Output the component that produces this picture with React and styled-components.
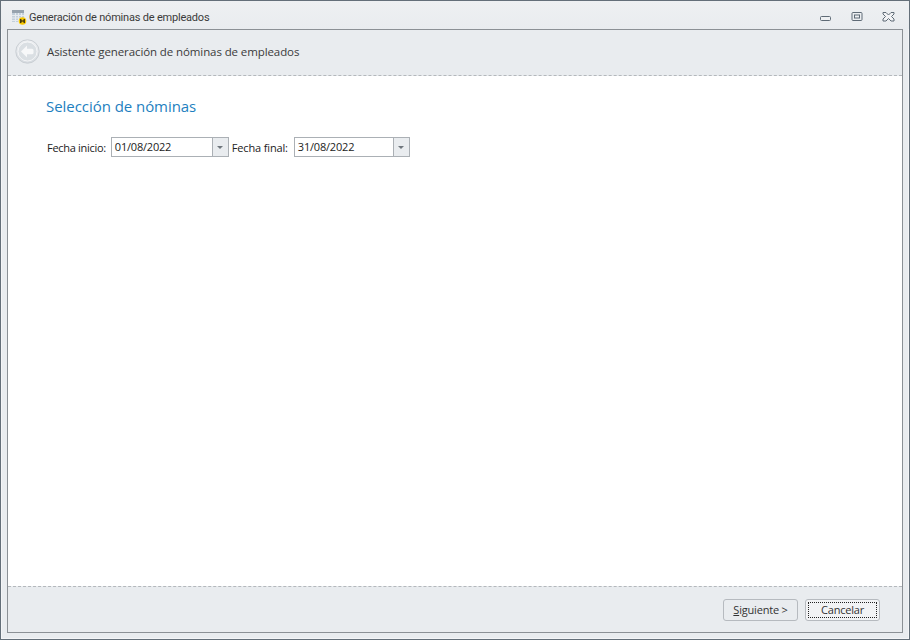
import React from "react";
import styled, { createGlobalStyle } from "styled-components";

const Global = createGlobalStyle`
  html, body { margin: 0; padding: 0; background: #e9ecef; }
  body { font-family: "Open Sans", "Noto Sans", "Liberation Sans", sans-serif; }
`;

const Window = styled.div`
  box-sizing: border-box;
  width: 910px;
  height: 640px;
  display: flex;
  flex-direction: column;
  background: #e9ecef;
  border: 1px solid #646f79;
  box-shadow: inset 0 0 0 1px #f4f5f7;
`;

const TitleBar = styled.div`
  height: 28px;
  flex: none;
  display: flex;
  align-items: center;
  padding: 3px 12px 0 11px;
  box-sizing: border-box;
  background: linear-gradient(#eef0f2, #e9ecef);
`;

const TitleText = styled.span`
  margin: 1px 0 0 1px;
  font-family: "Roboto", "Open Sans", sans-serif;
  font-size: 11px;
  letter-spacing: -0.2px;
  color: #3b3b3b;
  flex: 1;
`;

const WinButtons = styled.div`
  display: flex;
  align-items: center;
  gap: 19px;
  padding-right: 2px;
`;

const Client = styled.div`
  flex: 1;
  margin: 0 6px 6px 6px;
  display: flex;
  flex-direction: column;
  border: 1px solid #8b9095;
  min-height: 0;
`;

const Header = styled.div`
  box-sizing: border-box;
  height: 46px;
  flex: none;
  display: flex;
  align-items: center;
  gap: 8px;
  padding: 0 0 2px 7px;
  border-bottom: 1px dashed #b4b8bc;
`;

const HeaderText = styled.span`
  font-size: 11.5px;
  letter-spacing: -0.1px;
  color: #3b3b3b;
  margin-left: -1px;
`;

const Body = styled.div`
  flex: 1;
  background: #fff;
  padding: 20px 38px 0;
`;

const Heading = styled.h1`
  margin: 0 0 21px;
  font-size: 15px;
  line-height: 20px;
  font-weight: 400;
  letter-spacing: -0.05px;
  color: #1e7fc0;
`;

const DateRow = styled.div`
  display: flex;
  align-items: center;
  padding-left: 1px;
`;

const Label = styled.label`
  font-size: 11px;
  letter-spacing: ${p => p.$spacing}px;
  color: #222;
  margin: 0 ${p => p.$gap}px 0 ${p => p.$left}px;
`;

const DateBox = styled.div`
  box-sizing: border-box;
  width: ${p => p.$w}px;
  height: 20px;
  display: flex;
  border: 1px solid #abb0b5;
  background: #fff;
`;

const DateValue = styled.span`
  flex: 1;
  padding-left: 3px;
  font-size: 11px;
  letter-spacing: -0.2px;
  line-height: 18px;
  color: #222;
`;

const DropButton = styled.span`
  width: 15px;
  display: flex;
  align-items: center;
  justify-content: center;
  background: #e9ecef;
  border-left: 1px solid #abb0b5;
  &::after {
    content: "";
    border-left: 3px solid transparent;
    border-right: 3px solid transparent;
    border-top: 3px solid #6f767d;
  }
`;

const Footer = styled.div`
  height: 45px;
  flex: none;
  display: flex;
  align-items: center;
  justify-content: flex-end;
  gap: 7px;
  padding: 0 22px 0 0;
  border-top: 1px dashed #b4b8bc;
`;

const Button = styled.button`
  box-sizing: border-box;
  width: 75px;
  height: 22px;
  padding: 0;
  position: relative;
  border: 1px solid #b6babf;
  border-radius: 3px;
  background: ${p => (p.$focus ? "#f2f3f5" : "#e9ecef")};
  font: 11px "Open Sans", "Noto Sans", sans-serif;
  letter-spacing: -0.2px;
  color: #333;
  ${p => p.$focus && `
    &::after {
      content: "";
      position: absolute;
      inset: 2px;
      border: 1px dotted #222;
    }
  `}
  u { text-underline-offset: 1px; }
`;

const CalendarIcon = () => (
  <svg width="16" height="17" viewBox="0 0 16 17">
    <rect x="0" y="2" width="12" height="12" fill="#c3cfda" />
    <rect x="0" y="2" width="12" height="3" fill="#97a3ae" />
    <path d="M0 7.5h12M0 10h12M0 12.5h12M3.5 5v9M6.5 5v9M9.5 5v9" stroke="#e6ebef" strokeWidth="1" />
    <circle cx="10.5" cy="13" r="3.8" fill="#f7c600" />
    <path d="M8.8 11v4M12.2 11v4M8.8 13h3.4" stroke="#111" strokeWidth="1.1" fill="none" />
  </svg>
);

const BackIcon = () => (
  <svg width="25" height="25" viewBox="0 0 25 25">
    <defs>
      <linearGradient id="bk" x1="0" y1="0" x2="0" y2="1">
        <stop offset="0" stopColor="#f0f2f4" />
        <stop offset="1" stopColor="#d6dbe0" />
      </linearGradient>
    </defs>
    <circle cx="12.5" cy="12.5" r="11.7" fill="url(#bk)" stroke="#c9ced3" />
    <circle cx="12.5" cy="12.5" r="9.5" fill="#dadfe3" stroke="#f4f5f7" />
    <path d="M6 12.5L12 6.5v3.2h5a1.5 1.5 0 0 1 1.5 1.5v2.6a1.5 1.5 0 0 1-1.5 1.5h-5v3.2z" fill="#f7f8f9" />
  </svg>
);

const MinIcon = () => (
  <svg width="12" height="12" viewBox="0 0 12 12">
    <rect x="0.5" y="5.5" width="10" height="4" rx="1" fill="#eef0f2" stroke="#5f6b76" />
  </svg>
);

const MaxIcon = () => (
  <svg width="12" height="12" viewBox="0 0 12 12">
    <rect x="1" y="1.5" width="10" height="8" rx="1" fill="none" stroke="#5f6b76" />
    <rect x="3.5" y="4" width="5" height="3" fill="#eef0f2" stroke="#5f6b76" />
  </svg>
);

const CloseIcon = () => (
  <svg width="13" height="12" viewBox="0 0 13 12">
    <path d="M1 1.5h3l2.5 2.5L9 1.5h3v1.5L9.5 5.5 12 8v2H9L6.5 7.5 4 10H1V8l2.5-2.5L1 3z" fill="#f2f3f5" stroke="#5f6b76" strokeWidth="1" />
  </svg>
);

export default function App() {
  return (
    <>
      <Global />
      <Window>
        <TitleBar>
          <CalendarIcon />
          <TitleText>Generación de nóminas de empleados</TitleText>
          <WinButtons>
            <MinIcon />
            <MaxIcon />
            <CloseIcon />
          </WinButtons>
        </TitleBar>
        <Client>
          <Header>
            <BackIcon />
            <HeaderText>Asistente generación de nóminas de empleados</HeaderText>
          </Header>
          <Body>
            <Heading>Selección de nóminas</Heading>
            <DateRow>
              <Label $left={0} $gap={5} $spacing={-0.3}>Fecha inicio:</Label>
              <DateBox $w={118}>
                <DateValue>01/08/2022</DateValue>
                <DropButton />
              </DateBox>
              <Label $left={3} $gap={6} $spacing={-0.15}>Fecha final:</Label>
              <DateBox $w={116}>
                <DateValue>31/08/2022</DateValue>
                <DropButton />
              </DateBox>
            </DateRow>
          </Body>
          <Footer>
            <Button><u>S</u>iguiente &gt;</Button>
            <Button $focus>Cancelar</Button>
          </Footer>
        </Client>
      </Window>
    </>
  );
}
